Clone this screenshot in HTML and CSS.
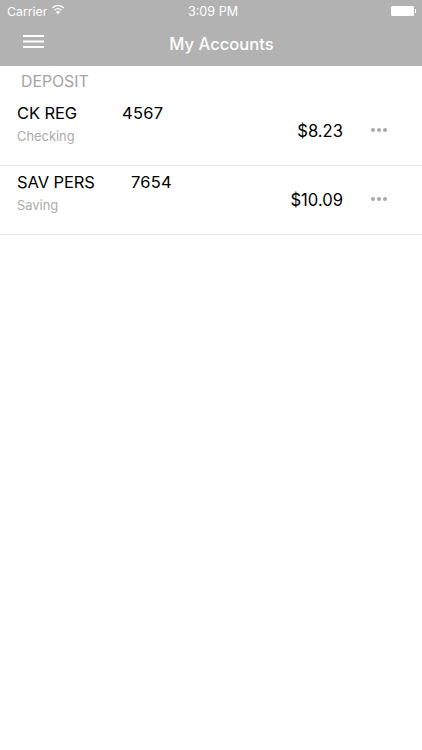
FILE: index.html
```html
<!DOCTYPE html>
<html lang="en">
<head>
<meta charset="utf-8">
<title>My Accounts</title>
<link rel="stylesheet" href="styles.css">
</head>
<body>
<header class="top">
  <div class="status">
    <div class="status-left">
      <span>Carrier</span>
      <svg class="wifi" width="14" height="11" viewBox="0 0 14 11"><path d="M7 10.4 4.9 8a3.2 3.2 0 0 1 4.2 0Z" fill="#fff"/><path d="M3.5 6.2A5.3 5.3 0 0 1 10.5 6.2M1.3 3.9A8.5 8.5 0 0 1 12.7 3.9" fill="none" stroke="#fff" stroke-width="1.3"/></svg>
    </div>
    <span class="clock">3:09 PM</span>
    <div class="battery"><span class="battery-body"></span><span class="battery-tip"></span></div>
  </div>
  <div class="nav">
    <svg class="menu" width="21" height="13" viewBox="0 0 21 13"><path d="M0 1h21M0 6.5h21M0 12h21" stroke="#fff" stroke-width="2" fill="none"/></svg>
    <h1>My Accounts</h1>
  </div>
</header>
<main>
  <h2 class="section">DEPOSIT</h2>
  <article class="row">
    <div class="info">
      <div class="name"><span class="label-a">CK REG</span><span class="num">4567</span></div>
      <div class="type">Checking</div>
    </div>
    <div class="amount">$8.23</div>
    <div class="dots"><i></i><i></i><i></i></div>
  </article>
  <article class="row">
    <div class="info">
      <div class="name"><span class="label-b">SAV PERS</span><span class="num">7654</span></div>
      <div class="type">Saving</div>
    </div>
    <div class="amount">$10.09</div>
    <div class="dots"><i></i><i></i><i></i></div>
  </article>
</main>
</body>
</html>
```
FILE: styles.css
```css
* { box-sizing: border-box; }
html, body { margin: 0; padding: 0; }
body {
  width: 422px;
  height: 750px;
  background: #fff;
  overflow: hidden;
  font-family: Inter, "Liberation Sans", sans-serif;
  color: #000;
}
.top { height: 66px; background: #b2b2b2; color: #fff; display: flex; flex-direction: column; }
.status {
  height: 22px;
  padding: 0 6px 0 7px;
  display: flex;
  align-items: center;
  justify-content: space-between;
  font-size: 12.3px;
  position: relative;
}
.status-left { display: flex; align-items: center; gap: 4px; }
.wifi { margin-top: -3px; }
.clock { position: absolute; left: 4px; right: 0; text-align: center; font-size: 12.6px; }
.battery { display: flex; align-items: center; }
.battery-body { width: 23px; height: 10px; background: #fff; border-radius: 1.5px; }
.battery-tip { width: 1.5px; height: 4px; background: #fff; margin-left: 0.5px; }
.nav { flex: 1; display: flex; align-items: center; justify-content: center; padding-left: 21px; position: relative; }
.nav h1 { margin: 0 0 1px; font-size: 16.6px; font-weight: 500; }
.menu { position: absolute; left: 23px; top: 13px; }
.section {
  margin: 0;
  padding: 6px 0 0 21px;
  height: 31px;
  font-size: 15.8px;
  font-weight: 400;
  line-height: 19px;
  color: #a3a3a3;
}
.row {
  height: 69px;
  padding-left: 17px;
  border-bottom: 1px solid #e8e8e8;
  display: flex;
  position: relative;
}
.info { flex: 1; padding-top: 6px; }
.name { display: flex; font-size: 16.5px; line-height: 20px; letter-spacing: -0.1px; }
.num { letter-spacing: 0.25px; }
.label-a { width: 106px; margin-right: -1px; }
.label-b { width: 114px; }
.type { margin-top: 6px; font-size: 12.9px; line-height: 16px; color: #ababab; }
.amount { align-self: center; margin-bottom: 1px; font-size: 16.6px; line-height: 20px; }
.dots { width: 79px; padding-left: 28px; display: flex; gap: 2px; align-self: center; margin-bottom: 2px; }
.dots i { width: 4px; height: 4px; border-radius: 50%; background: #a8a8a8; }
```
